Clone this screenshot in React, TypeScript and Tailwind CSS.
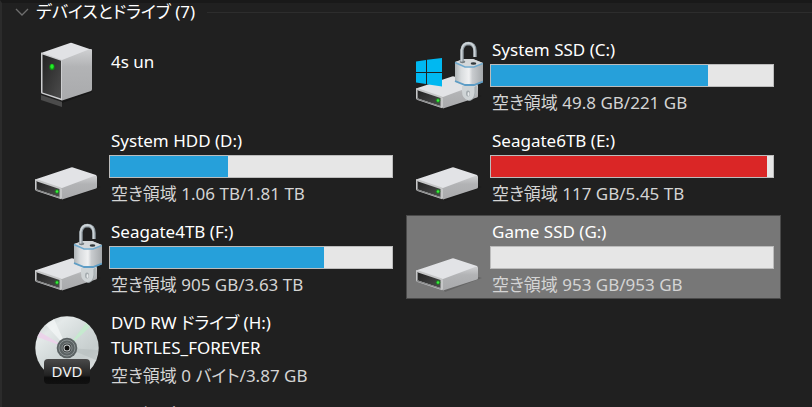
import { useState } from "react";
import clsx from "clsx";

type IconKind = "server" | "drive" | "unlocked" | "windows" | "dvd";

interface Device {
  id: string;
  name: string;
  label?: string;
  free?: string;
  used?: number;
  icon: IconKind;
}

const devices: Device[] = [
  { id: "nas", name: "4s un", icon: "server" },
  { id: "c", name: "System SSD (C:)", free: "空き領域 49.8 GB/221 GB", used: 77, icon: "windows" },
  { id: "d", name: "System HDD (D:)", free: "空き領域 1.06 TB/1.81 TB", used: 42, icon: "drive" },
  { id: "e", name: "Seagate6TB (E:)", free: "空き領域 117 GB/5.45 TB", used: 98, icon: "drive" },
  { id: "f", name: "Seagate4TB (F:)", free: "空き領域 905 GB/3.63 TB", used: 76, icon: "unlocked" },
  { id: "g", name: "Game SSD (G:)", free: "空き領域 953 GB/953 GB", used: 0, icon: "drive" },
  {
    id: "h",
    name: "DVD RW ドライブ (H:)",
    label: "TURTLES_FOREVER",
    free: "空き領域 0 バイト/3.87 GB",
    icon: "dvd",
  },
];

const Gradients = () => (
  <svg className="absolute size-0" aria-hidden="true">
    <defs>
      <linearGradient id="front" x1="0" y1="0" x2="1" y2="1">
        <stop offset="0" stopColor="#232323" />
        <stop offset="1" stopColor="#4c4c4c" />
      </linearGradient>
      <linearGradient id="side" x1="0" y1="0" x2="0" y2="1">
        <stop offset="0" stopColor="#cfd0d2" />
        <stop offset="0.35" stopColor="#b2b3b5" />
        <stop offset="1" stopColor="#a9aaac" />
      </linearGradient>
      <linearGradient id="body" x1="0" y1="0" x2="1" y2="0">
        <stop offset="0" stopColor="#aeb3b6" />
        <stop offset="0.22" stopColor="#d9dcde" />
        <stop offset="0.5" stopColor="#f0f1f2" />
        <stop offset="0.62" stopColor="#c9cccf" />
        <stop offset="1" stopColor="#a4a8ab" />
      </linearGradient>
      <linearGradient id="disc" x1="0" y1="0" x2="0.8" y2="1">
        <stop offset="0" stopColor="#c3cbcb" />
        <stop offset="0.25" stopColor="#e4e9e9" />
        <stop offset="0.5" stopColor="#d3dada" />
        <stop offset="0.75" stopColor="#c6cdcd" />
        <stop offset="1" stopColor="#dde2e2" />
      </linearGradient>
      <linearGradient id="plate" x1="0" y1="0" x2="0" y2="1">
        <stop offset="0" stopColor="#4a4a4a" />
        <stop offset="0.65" stopColor="#222222" />
        <stop offset="0.75" stopColor="#0c0c0c" />
        <stop offset="1" stopColor="#111111" />
      </linearGradient>
    </defs>
  </svg>
);

const DriveShape = () => (
  <g>
    <path d="M28 74L64 62L67 63L30 77Z" fill="#000000" opacity="0.15" />
    <path d="M1 55.500L37 43.500Q38 43 39 43.500L62 51Q63 51.500 62 52.500L29 65Z" fill="#e2e3e6" />
    <path d="M28 64L60 52Q63 51 63 53V63Q63 64 62 64.500L28 75.500Z" fill="url(#side)" />
    <path d="M2 55L27 63.500Q28 64 28 65V74Q28 75.500 26.500 75L2.500 67Q1 66.500 1 65V56Q1 54.700 2 55Z" fill="#c6c7c8" />
    <path d="M3 57.500L25.500 65V73L3 65.500Z" fill="url(#front)" />
    <path d="M3 65.500L25.500 73V74L2 66.500V57H3Z" fill="#858687" />
    <circle cx="23" cy="67.500" r="2.400" fill="#149b18" opacity="0.5" />
    <circle cx="23" cy="67.500" r="1.300" fill="#31f536" />
  </g>
);

const PadlockShape = () => (
  <g>
    <path d="M50 53H62V61L56 65H50Z" fill="#b4babd" />
    <path d="M47 53H60V60Q59 67.500 53.500 67.500Q47 66 47 58Z" fill="#cfd4d6" />
    <path d="M60 54V60Q59 67.500 53.500 67.500" fill="none" stroke="#a4abae" />
    <ellipse cx="53" cy="60.500" rx="2" ry="3" fill="#a3aaae" />
    <ellipse cx="53.500" cy="61" rx="1" ry="2" fill="#e8ebec" />
    <path d="M40 29L49 26H58L68 30V49L59 53H50L40 49Z" fill="url(#body)" />
    <path d="M40 29L49 26H58L68 30L59 33.500H50Z" fill="#d4d8da" />
    <ellipse cx="47.500" cy="28.800" rx="2.800" ry="1.400" fill="#777e82" />
    <ellipse cx="58.500" cy="30.500" rx="2.800" ry="1.300" fill="#33393c" />
    <path d="M47 28.500V17Q48 10.500 53.500 10.500Q60 11 60 18V24" fill="none" stroke="#8f9aa1" strokeWidth="3.400" />
    <path d="M46.500 28.500V17Q47.500 10 53.500 10Q59.500 10.500 59.500 18V24" fill="none" stroke="#ccd3d7" strokeWidth="1.800" />
    <path d="M40 29.500L50 34H59L68 30.500" fill="none" stroke="#6fa9cd" strokeWidth="1.500" />
    <path d="M40 48L50 52H59L68 48.500" fill="none" stroke="#5d9dc6" strokeWidth="1.800" />
  </g>
);

const DeviceIcon = ({ kind }: { kind: IconKind }) => (
  <svg viewBox="0 0 68 84" className="h-[84px] w-[68px] shrink-0" aria-hidden="true">
    {kind === "server" && (
      <g>
        <path d="M7 62L28 69V74L7 67Z" fill="#4b4b4b" />
        <path d="M28 68L58 57V59L28 70Z" fill="#171717" />
        <path d="M7 20L36 10Q37 9.700 38 10L57 16.500L28 28Z" fill="#e1e2e5" />
        <path d="M28 27L56 16Q58 15.500 58 17V56Q58 57.500 57 58L28 67.500Z" fill="url(#side)" />
        <path d="M7 19.500L27 26.500Q28 27 28 28V67.500L7.500 60.500Q7 60 7 59Z" fill="#cdced0" />
        <path d="M8.500 21.500L27 27.700V65.500L8.500 59.500Z" fill="url(#front)" />
        <ellipse cx="18" cy="34" rx="2.600" ry="3.200" fill="#0f8a13" />
        <ellipse cx="18" cy="33.500" rx="1.700" ry="2.200" fill="#24ed29" />
      </g>
    )}
    {(kind === "drive" || kind === "unlocked" || kind === "windows") && <DriveShape />}
    {kind === "windows" && (
      <path
        d="M1 28.500L11 27V39H1ZM12 26.800L27 25V39H12ZM1 40H11V51L1 49.500ZM12 40H27V53.500L12 51.200Z"
        fill="#00b8f1"
      />
    )}
    {(kind === "unlocked" || kind === "windows") && <PadlockShape />}
    {kind === "dvd" && (
      <g>
        <circle cx="33" cy="42" r="31.700" fill="url(#disc)" />
        <path d="M33 42L3.500 31L6 26Z" fill="#ecd2ea" opacity="0.9" />
        <path d="M33 42L52 17L56 21Z" fill="#c4ebcd" opacity="0.9" />
        <path d="M33 42L12 19L20 13Z" fill="#f5f8f8" opacity="0.7" />
        <path d="M33 42L64.500 44L62 54Z" fill="#b2baba" opacity="0.5" />
        <circle cx="33" cy="42" r="10.300" fill="#5b6263" />
        <circle cx="33" cy="42" r="8" fill="none" stroke="#8b9293" />
        <circle cx="33" cy="42" r="5" fill="#303536" stroke="#8a9091" />
        <circle cx="33" cy="42" r="3.500" fill="#d2d6d6" />
        <circle cx="33" cy="42" r="2.500" fill="#111111" />
        <rect x="10" y="53" width="46" height="25" rx="4" fill="url(#plate)" />
        <text x="33" y="71" textAnchor="middle" fontSize="15" fill="#f2f2f2">
          DVD
        </text>
      </g>
    )}
  </svg>
);

const UsageBar = ({ name, used }: { name: string; used: number }) => (
  <span
    role="meter"
    aria-label={name}
    aria-valuenow={used}
    aria-valuemin={0}
    aria-valuemax={100}
    className="mt-0.5 block h-[23px] border border-[#bcbcbc] bg-[#e6e6e6]"
  >
    <span
      className={clsx("block h-full", used > 90 ? "bg-[#da2626]" : "bg-[#26a0da]")}
      style={{ width: `${used}%` }}
    />
  </span>
);

interface DeviceTileProps {
  device: Device;
  selected: boolean;
  onSelect: () => void;
}

const DeviceTile = ({ device, selected, onSelect }: DeviceTileProps) => (
  <button
    type="button"
    aria-pressed={selected}
    onClick={onSelect}
    className={clsx(
      "flex h-[84px] items-center gap-[7px] border pl-2 pr-1.5 text-left",
      selected ? "border-[#4a4a4a] bg-[#777777]" : "border-transparent",
    )}
  >
    <DeviceIcon kind={device.icon} />
    <span
      className={clsx(
        "flex min-w-0 flex-1 flex-col self-stretch leading-6",
        device.free ? "pt-1" : "pt-4",
      )}
    >
      <span className="truncate pl-0.5">{device.name}</span>
      {device.label && <span className="mt-px truncate pl-0.5">{device.label}</span>}
      {device.used !== undefined && <UsageBar name={device.name} used={device.used} />}
      {device.free && <span className="mt-1 truncate pl-0.5 text-[#d4d4d4]">{device.free}</span>}
    </span>
  </button>
);

const GroupHeader = ({ title }: { title: string }) => (
  <h2 className="flex h-6 items-center whitespace-nowrap">
    <svg viewBox="0 0 14 8" className="mr-[7px] h-2 w-3.5" fill="none" aria-hidden="true">
      <path d="M1 1L7 7L13 1" stroke="#6e6e6e" strokeWidth="1.300" />
    </svg>
    {title}
    <span className="ml-3 h-px flex-1 bg-[#2d2d2d]" />
  </h2>
);

const App = () => {
  const [selectedId, setSelectedId] = useState("g");

  return (
    <main className="h-screen overflow-hidden border-l-2 border-t-3 border-l-[#2b2b2b] border-t-[#191919] bg-[#202020] font-['Noto_Sans','Noto_Sans_CJK_JP',sans-serif] text-[17px] text-white [font-feature-settings:'palt']">
      <Gradients />
      <section className="-mt-[3px] pl-[13px]">
        <GroupHeader title="デバイスとドライブ (7)" />
        <div className="mt-[9px] grid grid-cols-[repeat(auto-fill,minmax(360px,1fr))] gap-x-1.5 gap-y-[7px] pl-2.5 pr-[31px]">
          {devices.map((device) => (
            <DeviceTile
              key={device.id}
              device={device}
              selected={device.id === selectedId}
              onSelect={() => setSelectedId(device.id)}
            />
          ))}
        </div>
      </section>
      <section className="mt-[13px] pl-[13px]">
        <GroupHeader title="ネットワークの場所 (1)" />
      </section>
    </main>
  );
};

export default App;
